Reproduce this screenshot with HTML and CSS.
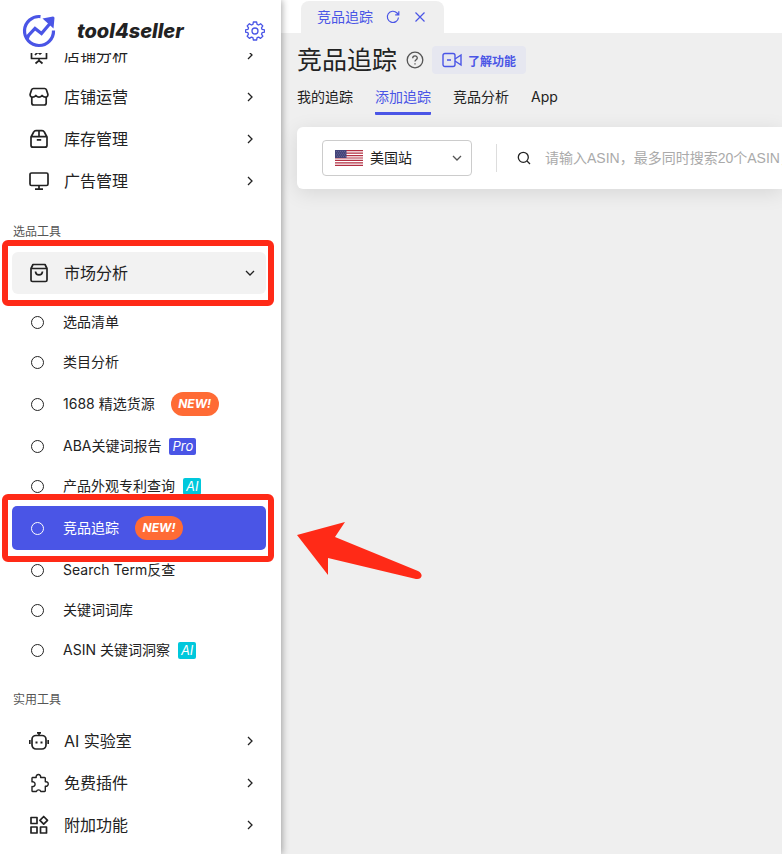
FILE: index.html
```html
<!DOCTYPE html>
<html lang="zh-CN">
<head>
  <meta charset="UTF-8" />
  <meta name="viewport" content="width=device-width, initial-scale=1.0"/>
  <title>竞品追踪 - tool4seller</title>
  <link rel="stylesheet" href="styles.css">
</head>
<body>
  <svg class="symbols" aria-hidden="true">
    <symbol id="arrow-right" viewBox="0 0 12 12"><path d="M4 2l4 4-4 4"/></symbol>
    <symbol id="arrow-down" viewBox="0 0 12 12"><path d="M2 4l4 4 4-4"/></symbol>
  </svg>

  <aside class="sidebar">
    <header class="brand">
      <svg class="logo" viewBox="0 0 34 34">
        <path d="M18.500 2.600A14.500 14.500 0 1 0 31.500 16.500"/>
        <path d="M5 25l1.500-3.500 6.500-7 6.500 5L28 9.500"/>
        <path class="logo-tip" d="M20.500 4.500L31 2.500q1.500 0 1.500 1.500L31.500 14.500z"/>
      </svg>
      <span class="brand-name">tool4seller</span>
      <button class="icon-button settings" type="button" aria-label="设置">
        <svg viewBox="0 0 20 20">
          <path d="M8.400 1h3.200l.5 2.400 1.500.6 2-1.300 2.200 2.200-1.300 2 .6 1.500 2.400.5v2.300l-2.400.5-.6 1.500 1.300 2-2.200 2.200-2-1.300-1.500.6-.5 2.300H8.400l-.5-2.300-1.500-.6-2 1.300-2.200-2.200 1.300-2-.6-1.500L.5 11.200V8.900l2.400-.5.6-1.500-1.300-2 2.200-2.200 2 1.300 1.500-.6z"/>
          <circle cx="10" cy="10" r="3"/>
        </svg>
      </button>
    </header>

    <nav class="nav">
      <div class="menu">
        <a class="menu-item" href="#">
          <svg class="icon" viewBox="0 0 20 20"><path d="M1 3h18M2.500 3v10.500h15V3M6 10l3-3 2 2 3-3M10 13.500v2M6.500 18.500L10 15.500l3.500 3"/></svg>
          <span>店铺分析</span>
          <svg class="arrow"><use href="#arrow-right"/></svg>
        </a>
        <a class="menu-item" href="#">
          <svg class="icon" viewBox="0 0 20 20"><path d="M4.500 1.500h11a2 2 0 0 1 1.900 1.300L18.800 7c.5 2-.8 3.200-2.500 3.200-1.400 0-2.400-.8-3.200-1.700-.8.900-1.700 1.700-3.100 1.700S7.700 9.400 6.900 8.500c-.8.900-1.800 1.700-3.200 1.700C2 10.200.7 9 1.200 7l1.400-4.200a2 2 0 0 1 1.900-1.300zM2.800 10.200V16a2 2 0 0 0 2 2h10.400a2 2 0 0 0 2-2v-5.800"/></svg>
          <span>店铺运营</span>
          <svg class="arrow"><use href="#arrow-right"/></svg>
        </a>
        <a class="menu-item" href="#">
          <svg class="icon" viewBox="0 0 20 20"><path d="M2 8l2.700-5A2.500 2.500 0 0 1 7 1.600h6A2.500 2.500 0 0 1 15.300 3L18 8v8.200a2 2 0 0 1-2 2H4a2 2 0 0 1-2-2zM2 7.600h16M10 1.600v6M7.800 10.800h4.400"/></svg>
          <span>库存管理</span>
          <svg class="arrow"><use href="#arrow-right"/></svg>
        </a>
        <a class="menu-item" href="#">
          <svg class="icon" viewBox="0 0 20 20"><rect x="1" y="2" width="18" height="12.500" rx="1.500"/><path d="M10 14.500v3.500M6 18.200h8"/></svg>
          <span>广告管理</span>
          <svg class="arrow"><use href="#arrow-right"/></svg>
        </a>

        <h2 class="menu-title">选品工具</h2>

        <a class="menu-item open marked" href="#">
          <svg class="icon" viewBox="0 0 20 20"><path d="M4 1.500h12l2 4V17a1.500 1.500 0 0 1-1.500 1.500h-13A1.500 1.500 0 0 1 2 17V5.500zM2 5.500h16M6.500 8.500c.3 4.500 6.700 4.500 7 0"/></svg>
          <span>市场分析</span>
          <svg class="arrow"><use href="#arrow-down"/></svg>
        </a>

        <div class="submenu">
          <a class="sub-item" href="#">选品清单</a>
          <a class="sub-item" href="#">类目分析</a>
          <a class="sub-item tall" href="#">1688 精选货源<em class="new">NEW!</em></a>
          <a class="sub-item" href="#">ABA关键词报告<em class="tag pro">Pro</em></a>
          <a class="sub-item" href="#">产品外观专利查询<em class="tag ai">AI</em></a>
          <a class="sub-item tall active marked" href="#">竞品追踪<em class="new">NEW!</em></a>
          <a class="sub-item" href="#">Search Term反查</a>
          <a class="sub-item" href="#">关键词词库</a>
          <a class="sub-item" href="#">ASIN 关键词洞察<em class="tag ai">AI</em></a>
        </div>

        <h2 class="menu-title">实用工具</h2>

        <a class="menu-item" href="#">
          <svg class="icon" viewBox="0 0 20 20"><rect x="3" y="4.500" width="14" height="13.500" rx="4"/><path d="M8 1.800h4M10 2v2.500M.8 9v4M19.200 9v4"/><path class="eyes" d="M7.500 10.500v2M12.500 10.500v2"/></svg>
          <span>AI 实验室</span>
          <svg class="arrow"><use href="#arrow-right"/></svg>
        </a>
        <a class="menu-item" href="#">
          <svg class="icon thin" viewBox="0 0 20 20"><path d="M3.500 4.500h3.700a2.300 2.300 0 1 1 4.400 0h3.900a.8.800 0 0 1 .8.800v3.500a2.300 2.300 0 1 1 0 4.400v4.500a.8.800 0 0 1-.8.800h-3.700a2.300 2.300 0 0 0-4.400 0H3.800a.8.800 0 0 1-.8-.8v-4.200a2.400 2.400 0 1 0 0-4.600V5z"/></svg>
          <span>免费插件</span>
          <svg class="arrow"><use href="#arrow-right"/></svg>
        </a>
        <a class="menu-item" href="#">
          <svg class="icon" viewBox="0 0 20 20"><path d="M2 2.500h6v6H2zM2 12h6v6H2zM11.500 12h6v6h-6zM14.700 1.500l3.800 3.800-3.800 3.800-3.800-3.800z"/></svg>
          <span>附加功能</span>
          <svg class="arrow"><use href="#arrow-right"/></svg>
        </a>
      </div>
    </nav>
  </aside>

  <main class="main">
    <div class="tabbar">
      <div class="page-tab">
        <span>竞品追踪</span>
        <button class="icon-button" type="button" aria-label="刷新">
          <svg viewBox="0 0 14 14"><path d="M12.500 7.500A5.600 5.600 0 1 1 11 3l1.500 1.600M12.800 1.200v3.600H9.200"/></svg>
        </button>
        <button class="icon-button" type="button" aria-label="关闭">
          <svg viewBox="0 0 14 14"><path d="M2.500 2.500l9 9M11.500 2.500l-9 9"/></svg>
        </button>
      </div>
    </div>

    <div class="content">
      <div class="heading">
        <h1>竞品追踪</h1>
        <svg class="help" viewBox="0 0 18 18"><circle cx="9" cy="9" r="7.800"/><path d="M6.700 7.200c0-3 4.600-3 4.600-.2 0 1.700-2.300 1.700-2.300 3.500M9 12.300v1.300"/></svg>
        <button class="learn" type="button">
          <svg viewBox="0 0 20 16"><rect x="1" y="1.500" width="12" height="13" rx="2"/><path d="M5 8h4M13 7l6-4v10l-6-4"/></svg>
          了解功能
        </button>
      </div>

      <div class="tabs">
        <a href="#">我的追踪</a>
        <a class="current" href="#">添加追踪</a>
        <a href="#">竞品分析</a>
        <a href="#">App</a>
      </div>

      <form class="search-card">
        <div class="site">
          <svg class="flag" viewBox="0 0 28 16">
            <path fill="#fff" d="M0 0h28v16H0z"/>
            <path stroke="#b22f42" stroke-width="1.230" d="M0 .6h28M0 3.080h28M0 5.540h28M0 8h28M0 10.460h28M0 12.920h28M0 15.400h28"/>
            <path fill="#44447a" d="M0 0h11.500v8H0z"/>
            <path stroke="#8585ab" stroke-width=".6" stroke-dasharray=".8 1.200" d="M1 1.500h10M2 3.200h9M1 4.900h10M2 6.600h9"/>
          </svg>
          <select aria-label="站点">
            <option>美国站</option>
          </select>
          <svg class="arrow site-arrow"><use href="#arrow-down"/></svg>
        </div>
        <label class="search">
          <svg class="search-icon" viewBox="0 0 14 14"><circle cx="6.300" cy="6.300" r="5"/><path d="M10 10l3 3"/></svg>
          <input type="text" aria-label="ASIN" placeholder="请输入ASIN，最多同时搜索20个ASIN，以逗号或换行隔开">
        </label>
      </form>
    </div>

    <svg class="pointer" viewBox="0 0 126 60">
      <path d="M0 14L48 1 38 16l83 34c6 3 4 9-2 8L31 37v17z"/>
    </svg>
  </main>
</body>
</html>
```
FILE: styles.css
```css
* {
  box-sizing: border-box;
}
body {
  margin: 0;
  display: flex;
  height: 100vh;
  overflow: hidden;
  background: #efefef;
  color: #222222;
  font-family: Inter, "Noto Sans CJK SC", sans-serif;
  font-size: 14px;
  line-height: 20px;
}
a {
  color: inherit;
  text-decoration: none;
}
svg {
  flex: none;
  fill: none;
  stroke: currentColor;
}
button, input, select {
  font-family: "Liberation Sans", "Noto Sans CJK SC", sans-serif;
  font-size: 14px;
}
.symbols {
  position: absolute;
  width: 0;
  height: 0;
}
.icon-button {
  display: flex;
  padding: 0;
  border: none;
  background: none;
  color: #4a55e6;
  cursor: pointer;
}
.icon-button svg {
  width: 14px;
  height: 14px;
  stroke-width: 1.2;
}

/* sidebar */
.sidebar {
  position: relative;
  z-index: 1;
  flex: none;
  display: flex;
  flex-direction: column;
  width: 281px;
  background: #ffffff;
  box-shadow: 1px 0 7px rgba(0, 0, 0, 0.35);
}
.brand {
  flex: none;
  display: flex;
  align-items: center;
  height: 53px;
  padding: 8px 16px 0 22px;
}
.logo {
  width: 34px;
  height: 34px;
  color: #4a55e6;
  stroke-width: 3.2;
}
.logo-tip {
  fill: currentColor;
  stroke: none;
}
.brand-name {
  margin-left: 21px;
  font-size: 20px;
  font-weight: 800;
  font-style: italic;
}
.settings {
  margin-left: auto;
}
.settings svg {
  width: 20px;
  height: 20px;
  stroke-width: 1.3;
  stroke-linejoin: round;
}
.nav {
  flex: 1;
  min-height: 0;
  overflow: hidden;
}
/* the list sits slightly scrolled under the brand row */
.menu {
  margin-top: -19px;
  padding: 0 15px 0 12px;
}
.menu-item {
  position: relative;
  display: flex;
  align-items: center;
  gap: 15px;
  height: 42px;
  padding: 0 10px 0 17px;
  border-radius: 6px;
  font-size: 16px;
}
.menu-item.open {
  background: #f2f2f2;
}
.icon {
  width: 20px;
  height: 20px;
  stroke-width: 1.7;
  stroke-linejoin: round;
}
.icon.thin {
  stroke-width: 1.4;
}
.eyes {
  stroke-width: 2;
}
.arrow {
  width: 12px;
  height: 12px;
  margin-left: auto;
  stroke-width: 1.3;
}
.menu-title {
  margin: 0;
  padding: 20px 0 10px 1px;
  font-size: 12px;
  font-weight: 400;
  color: #555555;
}
.submenu {
  padding: 8px 0 0;
}
.sub-item {
  position: relative;
  display: flex;
  align-items: center;
  height: 40px;
  padding-left: 20px;
  border-radius: 5px;
}
.sub-item::before {
  content: "";
  width: 11px;
  height: 11px;
  margin-right: 20px;
  border: 1px solid currentColor;
  border-radius: 50%;
}
.submenu .sub-item {
  padding-left: 19px;
}
.submenu .sub-item::before {
  margin-right: 19px;
}
.sub-item.tall {
  height: 44px;
}
.sub-item.active {
  background: #4a55e6;
  color: #ffffff;
}
.new {
  width: 48px;
  margin-left: 16px;
  border-radius: 12px;
  background: #ff6b35;
  color: #ffffff;
  font-size: 12px;
  font-weight: 700;
  line-height: 24px;
  text-align: center;
}
.tag {
  margin-left: 8px;
  padding: 0 3px;
  border-radius: 2px;
  color: #ffffff;
  font-size: 13px;
  line-height: 17px;
}
.pro {
  background: #4a55e6;
}
.ai {
  background: #00c8dc;
}
.marked::after {
  content: "";
  position: absolute;
  z-index: 2;
  inset: -12px -8px -12px -10px;
  border: 6px solid #ff2a17;
  border-radius: 6px;
}

/* main column */
.main {
  position: relative;
  flex: 1;
  min-width: 0;
  overflow: hidden;
}
.tabbar {
  display: flex;
  height: 33px;
  padding: 1px 0 0 20px;
  background: #ffffff;
}
.page-tab {
  display: flex;
  align-items: center;
  gap: 13px;
  padding: 0 17px 0 16px;
  border-radius: 8px 8px 0 0;
  background: #efefef;
  color: #4a55e6;
}
.content {
  padding: 11px 0 0 16px;
}
.heading {
  display: flex;
  align-items: center;
  height: 32px;
}
h1 {
  margin: 0;
  font-size: 25px;
  font-weight: 400;
  line-height: 32px;
}
.help {
  width: 18px;
  height: 18px;
  margin: 0 8px 0 9px;
  color: #555555;
  stroke-width: 1.3;
}
.learn {
  display: flex;
  align-items: center;
  gap: 6px;
  height: 28px;
  padding: 0 10px;
  border: none;
  border-radius: 4px;
  background: #e6e7f0;
  color: #4a55e6;
  font-size: 12px;
  font-weight: 700;
  cursor: pointer;
}
.learn svg {
  width: 20px;
  height: 16px;
  stroke-width: 1.4;
}
.tabs {
  display: flex;
  gap: 22px;
  margin-top: 11px;
}
.tabs a {
  padding-bottom: 5px;
  border-bottom: 3px solid transparent;
  border-radius: 1px;
}
.tabs .current {
  border-color: #4a55e6;
  color: #4a55e6;
}
.search-card {
  display: flex;
  align-items: center;
  height: 62px;
  margin-top: 12px;
  padding-left: 25px;
  border-radius: 6px 0 0 6px;
  background: #ffffff;
  box-shadow: 0 4px 20px rgba(0, 0, 0, 0.1);
}
.site {
  flex: none;
  display: grid;
  align-items: center;
  width: 150px;
}
.site > * {
  grid-area: 1 / 1;
}
.site select {
  width: 100%;
  height: 36px;
  padding: 0 32px 0 47px;
  border: 1px solid #cccccc;
  border-radius: 4px;
  background: none;
  color: #222222;
  appearance: none;
}
.flag {
  width: 28px;
  height: 16px;
  margin-left: 13px;
  stroke: none;
}
.site-arrow {
  justify-self: end;
  margin-right: 9px;
  color: #555555;
}
.search {
  flex: 1;
  min-width: 0;
  display: flex;
  align-items: center;
  gap: 14px;
  height: 28px;
  margin-left: 24px;
  padding-left: 20px;
  border-left: 1px solid #dddddd;
}
.search-icon {
  width: 14px;
  height: 14px;
  stroke-width: 1.3;
}
.search input {
  flex: 1;
  min-width: 0;
  padding: 0;
  border: none;
  outline: none;
}
.search input::placeholder {
  color: #aaaaaa;
}

/* red arrow over the page */
.pointer {
  position: absolute;
  top: 521px;
  left: 16px;
  width: 126px;
  height: 60px;
  fill: #ff2a17;
  stroke: none;
}
```
